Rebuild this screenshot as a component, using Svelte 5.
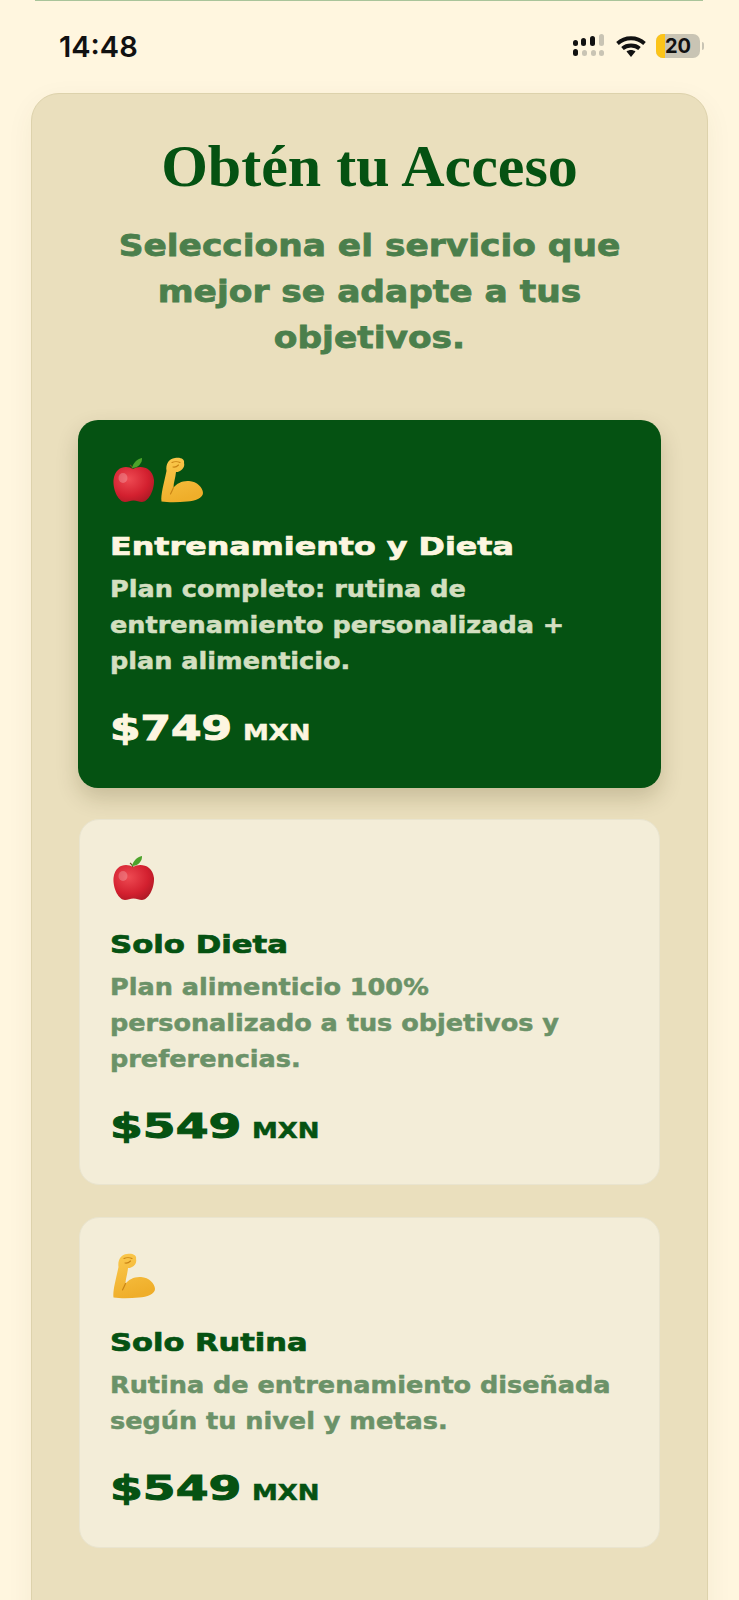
<script>
    // DejaVu is narrower than the reference's wide display face, so each line gets stretched
    const plans = [
        {
            icons: ['apple', 'arm'],
            title: 'Entrenamiento y Dieta',
            titleStretch: 1.27,
            lines: ['Plan completo: rutina de', 'entrenamiento personalizada +', 'plan alimenticio.'],
            price: '$749',
            stretch: 1.33,
            featured: true
        },
        {
            icons: ['apple'],
            title: 'Solo Dieta',
            titleStretch: 1.23,
            lines: ['Plan alimenticio 100%', 'personalizado a tus objetivos y', 'preferencias.'],
            price: '$549',
            stretch: 1.43,
            featured: false
        },
        {
            icons: ['arm'],
            title: 'Solo Rutina',
            titleStretch: 1.22,
            lines: ['Rutina de entrenamiento diseñada', 'según tu nivel y metas.'],
            price: '$549',
            stretch: 1.43,
            featured: false
        }
    ];
    const priceBase = 91;
</script>

{#snippet apple()}
    <svg class="emoji" viewBox="0 0 44 46" aria-hidden="true">
        <defs>
            <radialGradient id="appleFill" cx="0.38" cy="0.35" r="0.8">
                <stop offset="0" stop-color="#ee4a52" />
                <stop offset="0.6" stop-color="#d3202f" />
                <stop offset="1" stop-color="#a31722" />
            </radialGradient>
        </defs>
        <path d="M21 12C15 8 3 9 1.500 23C.8 34 7 45 13 45C16 45 18 43.500 21.500 43.500C25 43.500 27 45 30 45C36 45 42.500 34 42 23C40.500 9 27 8 21 12Z" fill="url(#appleFill)" />
        <path d="M21 12C20.500 10.500 19.500 9 18 8" fill="none" stroke="#6e4a1e" stroke-width="1.200" />
        <path d="M20 11C21 6 25 2 30 1C30.500 6 26 11 20 11Z" fill="#4da32b" />
        <ellipse cx="11" cy="21" rx="4.500" ry="5" fill="#fff" opacity="0.22" />
    </svg>
{/snippet}

{#snippet arm()}
    <svg class="emoji" viewBox="0 0 44 46" aria-hidden="true">
        <defs>
            <linearGradient id="armFill" x1="0" y1="0" x2="0.3" y2="1">
                <stop offset="0" stop-color="#fbc94e" />
                <stop offset="1" stop-color="#efae2a" />
            </linearGradient>
        </defs>
        <path d="M1.500 44.500C.5 38 4 26 6.500 14C5.500 7 9 1.500 15 1C21 0 25 2.500 24 6C25 9 23 12.500 20 14C18.500 15 17 15 16 15C15.500 21 13.500 26 13.500 30.500C17 26.500 22 23.500 29 24C37 24.500 43 30.500 43 36C43 41 35 44 27 44.500C18 45.500 8 45.500 1.500 44.500Z" fill="url(#armFill)" />
        <path d="M12 5.500C14 4.500 18 4.500 20 5.500M13 10C15 10.500 17 9.500 18.500 8M13.500 30.500C12.500 33 11.500 35 10.500 37" fill="none" stroke="#c98414" stroke-width="1.100" stroke-linecap="round" />
    </svg>
{/snippet}

<div class="page">
    <div class="topline"></div>

    <header class="status">
        <span class="time">14:48</span>
        <div class="status-icons">
            <svg class="signal" viewBox="0 0 32 25" aria-hidden="true">
                <rect x="0" y="6" width="5" height="6" rx="2.500" fill="#111" />
                <rect x="8" y="4" width="5" height="8" rx="2.500" fill="#111" />
                <rect x="17" y="2" width="5" height="10" rx="2.500" fill="#111" />
                <rect x="26" y="0" width="5" height="12" rx="2.500" fill="#c9c4b4" />
                <rect x="0" y="15" width="5" height="7" rx="2.500" fill="#111" />
                <rect x="9" y="16" width="5" height="6" rx="2.500" fill="#c9c4b4" />
                <rect x="18" y="16" width="5" height="6" rx="2.500" fill="#c9c4b4" />
                <rect x="26" y="16" width="5" height="6" rx="2.500" fill="#c9c4b4" />
            </svg>
            <svg class="wifi" viewBox="0 0 32 24" aria-hidden="true">
                <path d="M16 23L11.500 17.500C14 15.500 18 15.500 20.500 17.500Z" fill="#111" />
                <path d="M2.500 9.500C10 2.500 22 2.500 29.500 9.500M7.500 14.500C12 10.500 20 10.500 24.500 14.500" fill="none" stroke="#111" stroke-width="3.800" stroke-linecap="butt" />
            </svg>
            <div class="battery">
                <span class="battery-level"></span>
                <span class="battery-num">20</span>
            </div>
            <span class="battery-cap"></span>
        </div>
    </header>

    <main class="panel">
        <h1>Obtén tu Acceso</h1>
        <p class="lead">
            <span>Selecciona el servicio que</span>
            <span>mejor se adapte a tus</span>
            <span>objetivos.</span>
        </p>

        <div class="plans">
            {#each plans as plan}
                <article class="plan" class:featured={plan.featured}>
                    <div class="icons">
                        {#each plan.icons as icon}
                            {#if icon === 'apple'}
                                {@render apple()}
                            {:else}
                                {@render arm()}
                            {/if}
                        {/each}
                    </div>
                    <h2 style="transform: scaleX({plan.titleStretch})">{plan.title}</h2>
                    <p class="desc">
                        {#each plan.lines as line}
                            <span>{line}</span>
                        {/each}
                    </p>
                    <p class="price">
                        <span
                            class="amount"
                            style="transform: scaleX({plan.stretch}); margin-right: {priceBase * (plan.stretch - 1)}px"
                        >{plan.price}</span>
                        <small>MXN</small>
                    </p>
                </article>
            {/each}
        </div>
    </main>
</div>

<style>
    :global(body) {
        margin: 0;
        background: #fff6df;
    }
    .page {
        height: 1600px;
        overflow: hidden;
        background: #fff6df;
        font-family: "DejaVu Sans", sans-serif;
        box-sizing: border-box;
    }
    .topline {
        height: 1px;
        margin: 0 36px 0 35px;
        background: #a9c49a;
    }
    .status {
        display: flex;
        align-items: center;
        justify-content: space-between;
        height: 92px;
        padding: 0 35px 0 59px;
        box-sizing: border-box;
    }
    .time {
        font-family: Inter, sans-serif;
        font-size: 29px;
        font-weight: 600;
        color: #111;
        margin-top: -1px;
    }
    .status-icons {
        display: flex;
        align-items: center;
        margin-top: -2px;
    }
    .signal {
        width: 32px;
        height: 25px;
    }
    .wifi {
        width: 32px;
        height: 24px;
        margin-left: 10px;
    }
    .battery {
        position: relative;
        width: 44px;
        height: 24px;
        margin-left: 9px;
        border-radius: 7px;
        background: #c9c4b4;
        overflow: hidden;
        text-align: center;
    }
    .battery-level {
        position: absolute;
        inset: 0 auto 0 0;
        width: 9px;
        background: #fcc419;
    }
    .battery-num {
        position: relative;
        font-family: Inter, sans-serif;
        font-size: 20px;
        font-weight: 700;
        line-height: 24px;
        color: #111;
    }
    .battery-cap {
        width: 2px;
        height: 8px;
        margin-left: 2px;
        border-radius: 0 2px 2px 0;
        background: #c9c4b4;
    }
    .panel {
        margin: 0 31px;
        padding: 37px 46px 0;
        height: 1600px;
        background: #eadfbd;
        border: 1px solid #ddd2ac;
        border-radius: 28px;
        box-shadow: 0 8px 28px rgba(90, 70, 20, 0.06);
        box-sizing: border-box;
    }
    h1 {
        margin: 0;
        font-family: "Liberation Serif", serif;
        font-size: 60px;
        font-weight: 700;
        line-height: 70px;
        text-align: center;
        color: #055212;
    }
    .lead {
        margin: 21px 0 0;
        font-size: 31px;
        font-weight: 700;
        line-height: 46px;
        text-align: center;
        color: #4b7f4c;
        -webkit-text-stroke: 0.8px currentColor;
    }
    .lead span {
        display: block;
        white-space: nowrap;
        transform: scaleX(1.11);
    }
    .plans {
        display: flex;
        flex-direction: column;
        gap: 33px;
        margin-top: 60px;
    }
    .plan {
        padding: 35px 30px 0;
        margin: 0 1px;
        height: 366px;
        border: 1px solid #e9e4cf;
        border-radius: 20px;
        background: #f3edd8;
        box-sizing: border-box;
    }
    .plan:last-child {
        height: 331px;
        margin-top: -1px;
    }
    .featured {
        margin: 0 0 -2px;
        padding: 37px 32px 0;
        height: 368px;
        border: 0;
        background: #055212;
        box-shadow: 0 10px 22px rgba(60, 50, 10, 0.2);
    }
    .icons {
        display: flex;
        gap: 4px;
        height: 46px;
        padding-left: 2px;
    }
    .emoji {
        width: 44px;
        height: 46px;
    }
    h2 {
        margin: 27px 0 0;
        font-size: 25px;
        font-weight: 700;
        line-height: 34px;
        color: #055212;
        white-space: nowrap;
        transform-origin: 0 50%;
        -webkit-text-stroke: 0.7px currentColor;
    }
    .featured h2 {
        color: #fdf6e0;
    }
    .desc {
        margin: 7px 0 0;
        font-size: 23px;
        font-weight: 700;
        line-height: 36px;
        color: #6b9268;
        -webkit-text-stroke: 0.5px currentColor;
    }
    .desc span {
        display: block;
        white-space: nowrap;
        transform: scaleX(1.11);
        transform-origin: 0 50%;
    }
    .featured .desc {
        color: #d3dfc0;
    }
    .price {
        margin: 27px 0 0;
        font-size: 33px;
        font-weight: 700;
        line-height: 46px;
        color: #055212;
        -webkit-text-stroke: 1px currentColor;
    }
    .amount {
        display: inline-block;
        transform-origin: 0 50%;
    }
    .price small {
        display: inline-block;
        font-size: 22px;
        transform: scaleX(1.18);
        transform-origin: 0 50%;
        -webkit-text-stroke: 0.5px currentColor;
    }
    .featured .price {
        color: #fdf6e0;
    }
</style>
